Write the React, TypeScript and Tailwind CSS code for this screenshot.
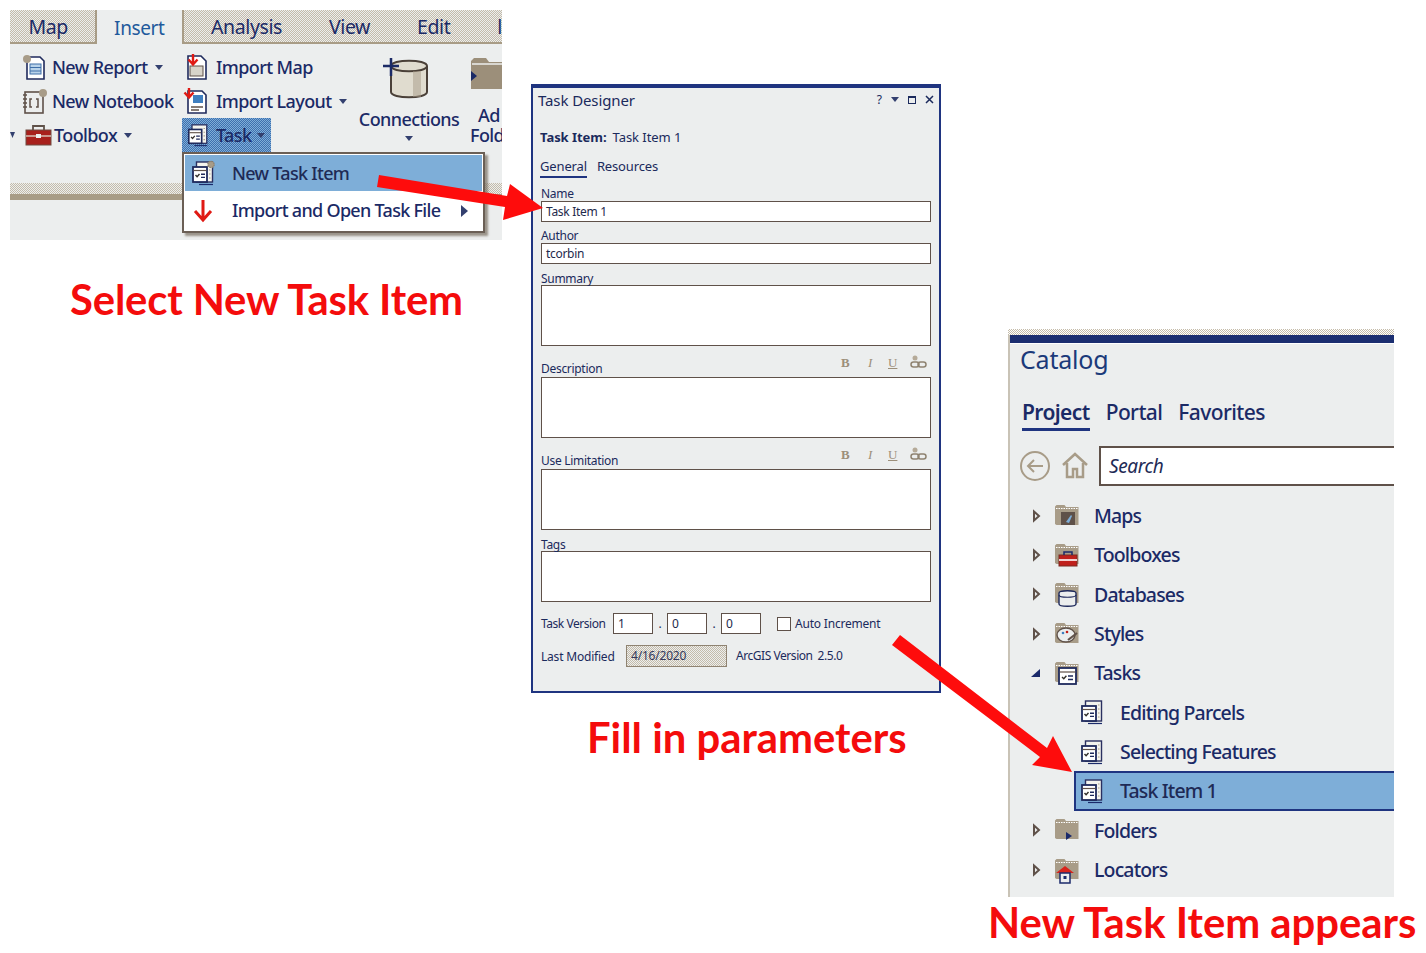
import React from "react";

const NAVY = "#1b2a6b";
const BROWN = "#5f5149";
const TAN = "#a89c88";

function TaskIcon({ size = 26, gear = false }: { size?: number; gear?: boolean }) {
  return (
    <svg width={size} height={size} viewBox="0 0 26 26" className="shrink-0">
      <rect x="6.500" y="2" width="16" height="20" fill="#f4f4ee" stroke="#2a3060" strokeWidth="1.4" />
      <path d="M19 6h1.500M19 10h1.500M19 14h1.500M19 18h1.500" stroke={TAN} strokeWidth="1.2" />
      <rect x="3" y="7" width="14" height="15" fill="#fff" stroke="#1f2a5c" strokeWidth="1.8" />
      <path d="M3.500 10.500h13" stroke={BROWN} strokeWidth="1.2" />
      <path d="M5.500 15l1.600 1.800 2.400-2.800" fill="none" stroke="#33302c" strokeWidth="1.4" />
      <path d="M11 14.200h4M11 17.400h4" stroke="#1f2a5c" strokeWidth="1.4" />
      <path d="M9 24.500h14" stroke={NAVY} strokeWidth="1.2" />
      {gear && <circle cx="21" cy="4.500" r="3.200" fill="#a89c88" stroke="#8b7f6b" strokeDasharray="1.500 1" strokeWidth="1.2" />}
    </svg>
  );
}

function Folder({ kind }: { kind: string }) {
  return (
    <svg width="26" height="28" viewBox="0 0 26 28" className="shrink-0">
      <path d="M1 6V4.500L2.500 3h8L12 5h12.500v18H2.500L1 22z" fill={TAN} />
      <path d="M2 6.500h22" stroke="#fff" strokeWidth="1.2" strokeDasharray="1.500 1" />
      {kind === "maps" && (
        <g>
          <rect x="7" y="10" width="14" height="13" fill={BROWN} />
          <path d="M12 20l5-7 1 1-3 7z" fill="#7eaed8" />
        </g>
      )}
      {kind === "tool" && (
        <g>
          <rect x="5" y="14" width="18" height="11" fill="#c0201c" stroke="#7a2a20" />
          <path d="M10 14v-3h8v3" fill="none" stroke={NAVY} strokeWidth="1.500" />
          <path d="M5 19h18" stroke="#fff" strokeWidth="1.600" />
        </g>
      )}
      {kind === "db" && (
        <g>
          <path d="M5 13c0-3 17-3 17 0v11c0 3-17 3-17 0z" fill="#eceeee" stroke="#1f2a5c" strokeWidth="1.400" />
          <path d="M5 15c0 3 17 3 17 0" fill="none" stroke="#1f2a5c" strokeWidth="1.200" />
        </g>
      )}
      {kind === "styles" && (
        <g>
          <ellipse cx="12" cy="15" rx="9" ry="7" fill="#eceeee" stroke={BROWN} strokeWidth="1.400" />
          <circle cx="9" cy="13" r="1.300" fill="#3f7fc0" />
          <circle cx="13" cy="12" r="1.300" fill="#c0201c" />
          <path d="M14 20l9-7" stroke={BROWN} strokeWidth="2.200" />
        </g>
      )}
      {kind === "tasks" && (
        <g>
          <rect x="5" y="9" width="17" height="16" fill="#fff" stroke="#1f2a5c" strokeWidth="1.800" />
          <path d="M5.500 13h16" stroke={BROWN} strokeWidth="1.200" />
          <path d="M8 18l1.800 1.800 2.600-3" fill="none" stroke="#33302c" strokeWidth="1.400" />
          <path d="M14 17h5M14 20.500h5" stroke="#1f2a5c" strokeWidth="1.400" />
        </g>
      )}
      {kind === "folders" && <path d="M12 16l6 4-6 4z" fill={NAVY} />}
      {kind === "loc" && (
        <g>
          <path d="M2 17l9-7 9 7z" fill="#d8241c" />
          <rect x="6" y="17" width="10" height="10" fill="#eceeee" stroke={NAVY} strokeWidth="1.500" />
          <rect x="9.500" y="20" width="3" height="3" fill={NAVY} />
        </g>
      )}
    </svg>
  );
}

function Caret({ open }: { open?: boolean }) {
  return (
    <svg width="12" height="14" viewBox="0 0 12 14" className="shrink-0">
      {open ? (
        <path d="M0 11L9 3v8z" fill={NAVY} />
      ) : (
        <path d="M3 2.500l5 4.500-5 4.500z" fill="#eceeee" stroke={BROWN} strokeWidth="2" />
      )}
    </svg>
  );
}

function Down({ className = "" }: { className?: string }) {
  return (
    <svg width="8" height="5" viewBox="0 0 8 5" className={className}>
      <path d="M0 0h8L4 5z" fill="#33406f" />
    </svg>
  );
}

function DocIcon({ kind }: { kind: string }) {
  return (
    <svg width="28" height="28" viewBox="0 0 28 28" className="shrink-0">
      {kind === "report" && (
        <g>
          <path d="M6 4h13l4 4v18H6z" fill="#fff" stroke="#1f2a5c" strokeWidth="1.600" />
          <rect x="9" y="11" width="11" height="10" fill="#b9d3ea" stroke="#3f6fa8" />
          <path d="M9 14.500h11M9 18h11" stroke="#3f6fa8" />
          <circle cx="6" cy="6" r="4" fill={TAN} />
        </g>
      )}
      {kind === "note" && (
        <g>
          <rect x="4" y="5" width="18" height="21" fill="#eceeee" stroke={BROWN} strokeWidth="1.600" />
          <path d="M2 8h4M2 12h4M2 16h4M2 20h4" stroke={BROWN} strokeWidth="1.400" />
          <path d="M11 12h-2v8h2M15 12h2v8h-2" fill="none" stroke={BROWN} strokeWidth="1.500" />
          <circle cx="22" cy="6" r="4" fill={TAN} />
        </g>
      )}
      {kind === "map" && (
        <g>
          <path d="M6 3h13l5 5v18H6z" fill="#fff" stroke="#1f2a5c" strokeWidth="1.600" />
          <rect x="8" y="13" width="13" height="10" fill="#d8d4ca" stroke={BROWN} />
          <path d="M11 1v9M6.500 6.500L11 11.500l4.500-5" fill="none" stroke="#e01a14" strokeWidth="2.400" />
        </g>
      )}
      {kind === "layout" && (
        <g>
          <path d="M6 4h14l4 4v18H6z" fill="#fff" stroke="#1f2a5c" strokeWidth="1.600" />
          <rect x="11" y="8" width="10" height="8" fill="#3f7fc0" />
          <path d="M9 20h12M9 23h8" stroke={BROWN} strokeWidth="1.500" />
          <path d="M7 1v9M2.500 5.500L7 10.500l4.500-5" fill="none" stroke="#e01a14" strokeWidth="2.400" />
        </g>
      )}
      {kind === "toolbox" && (
        <g>
          <rect x="2" y="9" width="25" height="15" fill="#a8201c" stroke="#6f4a40" />
          <path d="M9 9V5h11v4" fill="none" stroke={BROWN} strokeWidth="1.800" />
          <path d="M2 15h25" stroke="#d8cfc2" strokeWidth="1.400" />
          <rect x="12" y="13" width="5" height="4" fill="#eceeee" />
        </g>
      )}
    </svg>
  );
}

function RibbonRow({ icon, label, caret, ml = "ml-[3px]" }: { icon: string; label: string; caret?: boolean; ml?: string }) {
  return (
    <div className="flex h-[34px] items-center whitespace-nowrap text-[18px] font-medium tracking-[-0.6px]">
      <DocIcon kind={icon} />
      <span className={ml}>{label}</span>
      {caret && <Down className="ml-[7px]" />}
    </div>
  );
}

function Ribbon() {
  return (
    <div className="absolute left-[10px] top-[10px] h-[230px] w-[492px] overflow-hidden bg-[#eceeee] text-[#1b2a66]">
      <div className="relative flex h-[34px] border-b-2 border-[#a89c86] bg-[repeating-conic-gradient(#c4bba9_0_25%,#eceeee_0_50%)] bg-[length:2px_2px] text-[19.5px] tracking-[-0.4px]">
        <div className="flex w-[85px] items-center justify-center pr-[8px] pt-[2px]">Map</div>
        <div className="-mb-[2px] flex w-[90px] items-center justify-center border-x-2 border-[#a89c86] bg-[#eceeee] pt-[2px] text-[19px] text-[#1f5a9c]">Insert</div>
        <div className="flex items-center gap-[47px] pl-[27px] pt-[2px]">
          <span>Analysis</span>
          <span>View</span>
          <span>Edit</span>
          <span>l</span>
        </div>
      </div>
      <div className="flex h-[139px] pt-[6px]">
        <div className="flex w-[172px] shrink-0 flex-col pl-[11px]">
          <RibbonRow icon="report" label="New Report" caret />
          <RibbonRow icon="note" label="New Notebook" />
          <div className="-ml-[11px] flex items-center">
            <svg width="5" height="6" viewBox="0 0 5 6" className="mr-[9px]"><path d="M0 0h5L2.500 6z" fill="#33406f" /></svg>
            <RibbonRow icon="toolbox" label="Toolbox" caret ml="ml-[2px]" />
          </div>
        </div>
        <div className="flex w-[176px] shrink-0 flex-col">
          <RibbonRow icon="map" label="Import Map" ml="ml-[6px]" />
          <RibbonRow icon="layout" label="Import Layout" caret ml="ml-[6px]" />
          <div className="flex h-[34px] w-[89px] items-center gap-[6px] whitespace-nowrap bg-[repeating-conic-gradient(#3f6fae_0_25%,#7eaed8_0_50%)] bg-[length:2px_2px] pl-[4px] text-[18px] font-medium tracking-[-0.6px]">
            <TaskIcon size={24} />
            <span>Task</span>
            <Down />
          </div>
        </div>
        <div className="flex w-[102px] shrink-0 flex-col items-center pt-[6px] text-[18px] font-medium tracking-[-0.6px]">
          <svg width="54" height="46" viewBox="0 0 54 46">
            <path d="M9 10c0-7 36-7 36 0v26c0 7-36 7-36 0z" fill="#e0dccf" stroke="#4a4038" strokeWidth="2" />
            <path d="M9 10c0 7 36 7 36 0" fill="none" stroke="#4a4038" strokeWidth="2" />
            <path d="M35 15v26" stroke={TAN} strokeWidth="8" opacity="0.5" />
            <path d="M1 10h16M9 2v18" stroke="#1b2a66" strokeWidth="2.500" />
          </svg>
          <span className="mt-[5px] leading-[24px]">Connections</span>
          <Down className="mt-[5px]" />
        </div>
        <div className="ml-[10px] flex shrink-0 flex-col whitespace-nowrap pt-[5px] text-[18px] font-medium leading-[20px] tracking-[-0.6px]">
          <svg width="40" height="40" viewBox="0 0 40 40">
            <path d="M1 6l3-3h12l3 4h20v27H1z" fill="#9c8f7a" />
            <path d="M2 9h36" stroke="#eceeee" strokeWidth="1.500" />
            <path d="M1 16l6 5-6 5z" fill="#1b2a66" />
          </svg>
          <span className="ml-[8px] mt-[10px]">Ad</span>
          <span>Folder</span>
        </div>
      </div>
      <div className="h-[17px] border-b-[6px] border-[#a89c86] bg-[repeating-conic-gradient(#c4bba9_0_25%,#eceeee_0_50%)] bg-[length:2px_2px]" />
      <div className="absolute left-[172px] top-[142px] z-10 w-[303px] whitespace-nowrap border-2 border-[#6b5f55] bg-white p-[1px] text-[18px] font-medium tracking-[-0.7px] text-[#1e2a55] shadow-[3px_3px_2px_rgba(120,110,95,0.7)]">
        <div className="flex h-[36px] items-center bg-[#7eaed8] pl-[5px]">
          <TaskIcon size={26} gear />
          <span className="ml-[16px] pt-[1px]">New Task Item</span>
        </div>
        <div className="flex h-[39px] items-center pl-[5px] text-[#1b2a66]">
          <svg width="26" height="28" viewBox="0 0 26 28" className="shrink-0">
            <path d="M13 3v20M5 14l8 9 8-9" fill="none" stroke="#e01a14" strokeWidth="3" />
          </svg>
          <span className="ml-[16px]">Import and Open Task File</span>
          <svg width="7" height="12" viewBox="0 0 7 12" className="ml-[21px]"><path d="M0 0l7 6-7 6z" fill="#33406f" /></svg>
        </div>
      </div>
    </div>
  );
}

function Format() {
  return (
    <div className="flex items-center font-['Liberation_Serif',serif] text-[13px] leading-none text-[#9c8f7a]">
      <span className="w-[27px] font-bold">B</span>
      <span className="w-[20px] italic">I</span>
      <span className="w-[22px] underline">U</span>
      <svg width="18" height="14" viewBox="0 0 18 14">
        <circle cx="5" cy="3" r="2.500" fill="#b5aa98" />
        <rect x="1" y="7" width="8" height="5" rx="2.500" fill="none" stroke="#8f8371" strokeWidth="1.500" />
        <rect x="8" y="7" width="8" height="5" rx="2.500" fill="none" stroke="#8f8371" strokeWidth="1.500" />
      </svg>
    </div>
  );
}

function FieldLabel({ text, h, right, pb = "" }: { text: string; h: string; right?: boolean; pb?: string }) {
  return (
    <div className={`flex items-end justify-between ${h} ${pb}`}>
      <span className="text-[12px] leading-[15px] tracking-[-0.3px] text-[#1b2a5c]">{text}</span>
      {right && <div className="mb-[7px] mr-[3px]"><Format /></div>}
    </div>
  );
}

function Box({ h, children }: { h: string; children?: React.ReactNode }) {
  return (
    <div className={`${h} flex items-start border border-[#5f5149] bg-white pl-[4px] text-[12px] leading-[19px] tracking-[-0.3px] text-[#1e2a4c]`}>
      {children}
    </div>
  );
}

function Small({ v }: { v: string }) {
  return <div className="h-[21px] w-[40px] border border-[#5f5149] bg-white pl-[4px] text-[12px] leading-[19px] text-[#1e2a4c]">{v}</div>;
}

function Designer() {
  return (
    <div className="absolute left-[531px] top-[84px] h-[609px] w-[410px] border-x-2 border-b-2 border-t-4 border-[#1f3480] bg-[#eceeee] px-[8px] text-[#1b2a5c]">
      <div className="-ml-[3px] flex h-[26px] items-center justify-between">
        <span className="pb-[2px] text-[15px] tracking-[-0.1px]">Task Designer</span>
        <div className="-mr-[3px] mb-[3px] flex items-center gap-[9px] text-[12px]">
          <span>?</span>
          <Down />
          <span className="h-[8px] w-[8px] border border-t-2 border-[#1b2a5c]" />
          <svg width="9" height="9" viewBox="0 0 9 9"><path d="M1 1l7 7M8 1L1 8" stroke="#1b2a5c" strokeWidth="1.500" /></svg>
        </div>
      </div>
      <div className="-ml-[1px] mt-[15px] flex h-[18px] items-center gap-[6px] text-[13px] tracking-[-0.05px]">
        <span className="font-bold">Task Item:</span>
        <span>Task Item 1</span>
      </div>
      <div className="-ml-[1px] mt-[10px] flex h-[21px] gap-[10px] text-[13px] tracking-[-0.15px]">
        <span className="h-[21px] border-b-2 border-[#1f3480] leading-[18px]">General</span>
        <span className="leading-[18px]">Resources</span>
      </div>
      <FieldLabel text="Name" h="h-[23px]" />
      <Box h="h-[21px]">Task Item 1</Box>
      <FieldLabel text="Author" h="h-[21px]" />
      <Box h="h-[21px]">tcorbin</Box>
      <FieldLabel text="Summary" h="h-[22px]" pb="-mb-[1px]" />
      <Box h="h-[61px]" />
      <FieldLabel text="Description" h="h-[31px]" right pb="pb-[1px]" />
      <Box h="h-[61px]" />
      <FieldLabel text="Use Limitation" h="h-[31px]" right pb="pb-[1px]" />
      <Box h="h-[61px]" />
      <FieldLabel text="Tags" h="h-[22px]" pb="-mb-[1px]" />
      <Box h="h-[51px]" />
      <div className="mt-[11px] flex h-[21px] items-center text-[12px] tracking-[-0.2px]">
        <span className="w-[72px] tracking-[-0.45px]">Task Version</span>
        <Small v="1" />
        <span className="w-[14px] text-center">.</span>
        <Small v="0" />
        <span className="w-[14px] text-center">.</span>
        <Small v="0" />
        <span className="ml-[16px] h-[14px] w-[14px] border border-[#5f5149] bg-white" />
        <span className="ml-[4px]">Auto Increment</span>
      </div>
      <div className="mt-[11px] flex h-[22px] items-center text-[12px] tracking-[-0.2px]">
        <span className="w-[85px] pt-[1px]">Last Modified</span>
        <div className="h-[22px] w-[101px] border border-[#8f8371] bg-[repeating-conic-gradient(#c4bba9_0_25%,#eceeee_0_50%)] bg-[length:2px_2px] pl-[4px] leading-[20px] text-[#33395c]">4/16/2020</div>
        <span className="mb-[1px] ml-[9px] tracking-[-0.45px]">ArcGIS Version</span>
        <span className="mb-[1px] ml-[5px] tracking-[-0.4px]">2.5.0</span>
      </div>
    </div>
  );
}

function TreeRow({ kind, label, open }: { kind: string; label: string; open?: boolean }) {
  return (
    <div className="flex h-[39.33px] items-center pl-[21px]">
      <div className="w-[23px]"><Caret open={open} /></div>
      <Folder kind={kind} />
      <span className="ml-[14px]">{label}</span>
    </div>
  );
}

function ChildRow({ label, selected }: { label: string; selected?: boolean }) {
  return (
    <div className={`ml-[64px] flex h-[39.33px] items-center border-y-2 border-l-2 pl-[3px] ${selected ? "border-[#1f3480] bg-[#7eaed8] text-[#1e2a55]" : "border-transparent"}`}>
      <TaskIcon size={26} />
      <span className="ml-[15px]">{label}</span>
    </div>
  );
}

function Catalog() {
  return (
    <div className="absolute left-[1008px] top-[329px] h-[568px] w-[386px] border-l-2 border-[#c9c3b6] bg-[#eceeee] text-[#1b2a66]">
      <div className="-ml-[2px] h-[6px] bg-[repeating-conic-gradient(#c4bba9_0_25%,#ffffff_0_50%)] bg-[length:2px_2px]" />
      <div className="h-[8px] bg-[#1b2e70]" />
      <div className="h-[1px] bg-white" />
      <div className="-mt-[2px] ml-[10px] text-[25px] leading-[34px] tracking-[-0.2px] text-[#1b3a7a]">Catalog</div>
      <div className="ml-[12px] mt-[22px] flex gap-[16px] text-[21px] font-medium leading-[28px] tracking-[-0.6px]">
        <span className="border-b-[3px] border-[#1f3480] pb-[2px] font-semibold">Project</span>
        <span>Portal</span>
        <span>Favorites</span>
      </div>
      <div className="mt-[15px] flex items-center pl-[10px]">
        <svg width="30" height="30" viewBox="0 0 30 30" className="shrink-0">
          <circle cx="15" cy="15" r="14" fill="none" stroke={TAN} strokeWidth="2" />
          <path d="M23 15H8M14 9l-6 6 6 6" fill="none" stroke={TAN} strokeWidth="2" />
        </svg>
        <svg width="26" height="28" viewBox="0 0 26 28" className="ml-[12px] shrink-0">
          <path d="M1 13L13 2l12 11M5 11v14h6v-8h4v8h6V11" fill="none" stroke={TAN} strokeWidth="2.500" />
        </svg>
        <div className="ml-[11px] flex h-[40px] flex-1 items-center border-y-2 border-l-2 border-[#5f5149] bg-white pl-[8px] text-[19px] italic tracking-[-0.4px] text-[#1e2a55]">Search</div>
      </div>
      <div className="mt-[10px] whitespace-nowrap text-[19.5px] font-medium tracking-[-0.85px]">
        <TreeRow kind="maps" label="Maps" />
        <TreeRow kind="tool" label="Toolboxes" />
        <TreeRow kind="db" label="Databases" />
        <TreeRow kind="styles" label="Styles" />
        <TreeRow kind="tasks" label="Tasks" open />
        <ChildRow label="Editing Parcels" />
        <ChildRow label="Selecting Features" />
        <ChildRow label="Task Item 1" selected />
        <TreeRow kind="folders" label="Folders" />
        <TreeRow kind="loc" label="Locators" />
      </div>
    </div>
  );
}

function Caption({ text, className }: { text: string; className: string }) {
  return (
    <div className={`absolute whitespace-nowrap font-['Lato',sans-serif] text-[41.8px] font-bold leading-[50px] text-[#f40c0c] ${className}`}>{text}</div>
  );
}

export default function App() {
  return (
    <div className="relative h-[953px] w-[1426px] overflow-hidden bg-white font-['Noto_Sans',sans-serif]">
      <Ribbon />
      <Designer />
      <Catalog />
      <Caption text="Select New Task Item" className="left-[70px] top-[274px] tracking-[-0.15px]" />
      <Caption text="Fill in parameters" className="left-[587px] top-[712px]" />
      <Caption text="New Task Item appears" className="left-[988px] top-[897px]" />
      <svg width="1426" height="953" viewBox="0 0 1426 953" className="pointer-events-none absolute left-0 top-0 z-20">
        <polygon points="379,175 507,196 510,184 543,208 503,220 505,207 377,187" fill="#fe0c0c" />
        <polygon points="900,635 1047,748 1053,736 1072,772 1032,765 1040,757 892,645" fill="#fe0c0c" />
      </svg>
    </div>
  );
}
